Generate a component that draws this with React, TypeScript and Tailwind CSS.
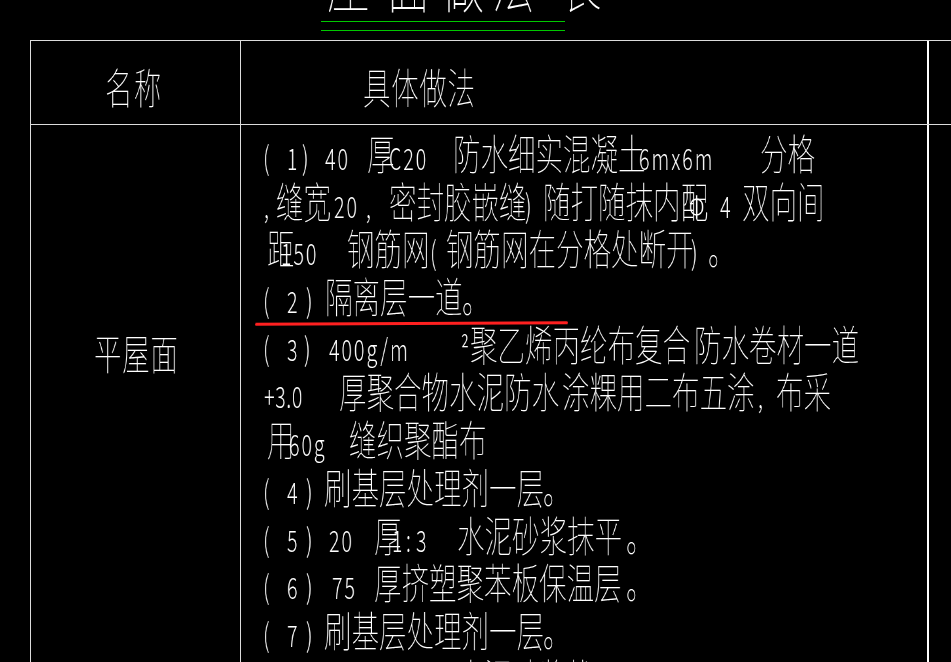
import type { ReactNode } from 'react'

type Kind = 'zh' | 'num' | 'pr' | 'title'

const SIZE: Record<Kind, string> = {
  zh: 'text-[42px]',
  num: 'text-[30px] tracking-[3px] font-light',
  pr: 'text-[32px] font-light',
  title: 'text-[65px]',
}

// one CAD text object: fixed slot width, narrow glyphs
function T({ w = '', k = 'zh', x = '', children }: { w?: string; k?: Kind; x?: string; children: ReactNode }) {
  return (
    <span className={`shrink-0 whitespace-nowrap leading-none ${SIZE[k]} ${w}`}>
      <span className={`inline-block origin-left scale-x-[0.655] will-change-transform ${x}`}>{children}</span>
    </span>
  )
}

function Line({ pl = 'pl-[22px]', children }: { pl?: string; children: ReactNode }) {
  return <div className={`flex h-[47.7px] items-baseline ${pl}`}>{children}</div>
}

function Num({ n, w = 'w-[19px]' }: { n: string; w?: string }) {
  return (
    <>
      <T k="pr" w="w-[24px]">(</T>
      <T k="num" w={w}>{n}</T>
    </>
  )
}

export default function App() {
  return (
    <div className="relative h-[662px] w-[951px] overflow-hidden bg-black font-['Noto_Sans_CJK_SC',sans-serif] font-thin text-white">
      {/* title, cut off at the top of the view */}
      <div className="flex h-[40px] flex-col">
        <div className="-mt-[53px] flex h-[65px] shrink-0 items-baseline pl-[327px]">
          <T k="title" w="w-[60px]">屋</T>
          <T k="title" w="w-[54px]">面</T>
          <T k="title" w="w-[51px]">做</T>
          <T k="title" w="w-[67px]">法</T>
          <T k="title">表</T>
        </div>
        <div className="ml-[321px] mt-[9px] h-[10px] w-[244px] shrink-0 border-y border-[#00c800]" />
      </div>

      <div className="ml-[30px] border-l border-t border-[#dcdcdc]">
        <div className="flex h-[84px] border-b border-[#dcdcdc]">
          <div className="flex w-[210px] shrink-0 items-baseline border-r border-[#dcdcdc] pl-[74px] pt-[24px]">
            <T x="tracking-[2px]">名称</T>
          </div>
          <div className="flex w-[688px] shrink-0 items-baseline border-r-2 border-white pl-[122px] pt-[24px]">
            <T x="tracking-[1px]">具体做法</T>
          </div>
          <div className="flex-1" />
        </div>

        <div className="flex h-[538px]">
          <div className="flex w-[210px] shrink-0 items-start border-r border-[#dcdcdc] pl-[63px] pt-[206px]">
            <T x="tracking-[1px]">平屋面</T>
          </div>
          <div className="w-[688px] shrink-0 border-r-2 border-white pt-[6px]">
            <Line>
              <Num n="1" w="w-[15px]" />
              <T k="pr" w="w-[23px]">)</T>
              <T k="num" w="w-[42px]">40</T>
              <T w="w-[22px]">厚</T>
              <T k="num" w="w-[64px]">C20</T>
              <T w="w-[186px]">防水细实混凝土</T>
              <T k="num" w="w-[121px]">6mx6m</T>
              <T>分格</T>
            </Line>
            <Line pl="pl-[23px]">
              <T k="num" w="w-[12px]">,</T>
              <T w="w-[58px]">缝宽</T>
              <T k="num" w="w-[32px]">20</T>
              <T k="num" w="w-[23px]">,</T>
              <T w="w-[136px]">密封胶嵌缝</T>
              <T k="pr" w="w-[18px]">)</T>
              <T w="w-[146px]">随打随抹内配</T>
              <T k="num" w="w-[31px]">Φ</T>
              <T k="num" w="w-[22px]">4</T>
              <T>双向间</T>
            </Line>
            <Line pl="pl-[26px]">
              <T w="w-[14px]">距</T>
              <T k="num" w="w-[66px]">150</T>
              <T w="w-[83px]">钢筋网</T>
              <T k="pr" w="w-[16px]">(</T>
              <T w="w-[245px]">钢筋网在分格处断开</T>
              <T k="pr" w="w-[17px]">)</T>
              <T>。</T>
            </Line>
            <Line>
              <Num n="2" />
              <T k="pr" w="w-[19px]">)</T>
              <T w="w-[137px]">隔离层一道</T>
              <T>。</T>
            </Line>
            <Line>
              <Num n="3" w="w-[17px]" />
              <T k="pr" w="w-[25px]">)</T>
              <T k="num" w="w-[132px]">400g/m</T>
              <T k="num" w="w-[9px]">²</T>
              <T w="w-[224px]">聚乙烯丙纶布复合</T>
              <T>防水卷材一道</T>
            </Line>
            <Line pl="pl-[23px]">
              <T k="num" w="w-[75px]" x="tracking-[1px]">+3.0</T>
              <T w="w-[223px]">厚聚合物水泥防水</T>
              <T w="w-[196px]">涂粿用二布五涂</T>
              <T k="num" w="w-[18px]">,</T>
              <T>布采</T>
            </Line>
            <Line pl="pl-[26px]">
              <T w="w-[22px]">用</T>
              <T k="num" w="w-[60px]">60g</T>
              <T>缝织聚酯布</T>
            </Line>
            <Line>
              <Num n="4" />
              <T k="pr" w="w-[18px]">)</T>
              <T w="w-[219px]">刷基层处理剂一层</T>
              <T>。</T>
            </Line>
            <Line>
              <Num n="5" />
              <T k="pr" w="w-[23px]">)</T>
              <T k="num" w="w-[45px]">20</T>
              <T w="w-[18px]">厚</T>
              <T k="num" w="w-[14px]">1</T>
              <T k="num" w="w-[10px]">:</T>
              <T k="num" w="w-[41px]">3</T>
              <T w="w-[169px]">水泥砂浆抹平</T>
              <T>。</T>
            </Line>
            <Line>
              <Num n="6" />
              <T k="pr" w="w-[26px]">)</T>
              <T k="num" w="w-[42px]">75</T>
              <T w="w-[252px]">厚挤塑聚苯板保温层</T>
              <T>。</T>
            </Line>
            <Line>
              <Num n="7" />
              <T k="pr" w="w-[18px]">)</T>
              <T w="w-[219px]">刷基层处理剂一层</T>
              <T>。</T>
            </Line>
            <Line>
              <Num n="8" />
              <T k="pr" w="w-[23px]">)</T>
              <T k="num" w="w-[45px]">20</T>
              <T w="w-[18px]">厚</T>
              <T k="num" w="w-[14px]">1</T>
              <T k="num" w="w-[10px]">:</T>
              <T k="num" w="w-[41px]">3</T>
              <T>水泥砂浆找平层。</T>
            </Line>
          </div>
          <div className="flex-1" />
        </div>
      </div>

      {/* red markup stroke */}
      <div className="absolute left-[255px] top-[322px] h-[3px] w-[313px] -rotate-[0.3deg] rounded-full bg-[#ff2020]" />
    </div>
  )
}
